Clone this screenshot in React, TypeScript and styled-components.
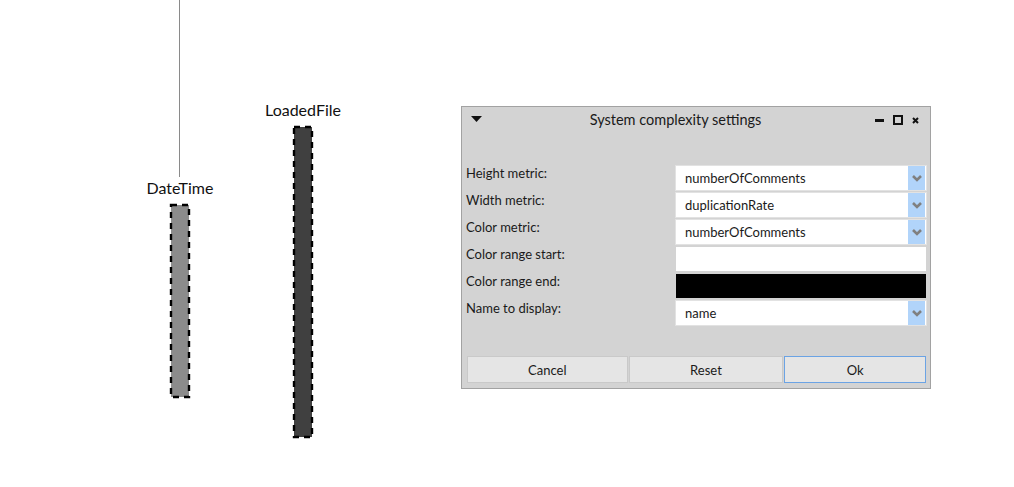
import React from "react";
import styled, { createGlobalStyle } from "styled-components";

const GlobalStyle = createGlobalStyle`
  *, *::before, *::after { box-sizing: border-box; }
  html, body { margin: 0; padding: 0; background: #ffffff; overflow: hidden; }
  body { font-family: Lato, "Liberation Sans", sans-serif; }
`;

const Stage = styled.div`
  position: relative;
  width: 1014px;
  height: 487px;
  background: #ffffff;
  overflow: hidden;
`;

const Canvas = styled.svg`
  position: absolute;
  left: 0;
  top: 0;
`;

const NodeLabel = styled.text`
  font-family: Lato, "Liberation Sans", sans-serif;
  font-size: 16px;
  fill: #111111;
`;

const Window = styled.div`
  position: absolute;
  left: 461px;
  top: 106px;
  width: 470px;
  height: 283px;
  border: 1px solid #a2a2a2;
  background: #d3d3d3;
  display: flex;
  flex-direction: column;
  padding: 0 4px 5px 4px;
`;

const TitleBar = styled.div`
  height: 27px;
  display: flex;
  align-items: center;
`;

const Title = styled.div`
  flex: 1;
  text-align: center;
  font-size: 14.5px;
  color: #1a1a1a;
  margin-top: -3px;
  margin-right: 6px;
`;

const TitleIcons = styled.div`
  display: flex;
  align-items: center;
  gap: 9px;
  padding-right: 7px;
  margin-top: -2px;
`;

const Form = styled.div`
  display: grid;
  grid-template-columns: 210px 250px;
  grid-auto-rows: 24px;
  row-gap: 3px;
  margin-top: 32px;
`;

const Label = styled.div`
  font-size: 13px;
  color: #1a1a1a;
  line-height: 16px;
  margin-top: -1px;
`;

const Dropdown = styled.div`
  display: flex;
  background: #ffffff;
  outline: 1px solid #e2e2e2;
`;

const DropText = styled.div`
  flex: 1;
  font-size: 13px;
  color: #1a1a1a;
  padding-left: 9px;
  display: flex;
  align-items: center;
`;

const DropArrow = styled.div`
  width: 17px;
  background: #b1d4fa;
  display: flex;
  align-items: center;
  justify-content: center;
  margin-right: 1px;
`;

const Swatch = styled.div<{ $color: string }>`
  background: ${(p) => p.$color};
`;

const Buttons = styled.div`
  margin-top: auto;
  display: flex;
  gap: 1px;
  padding-left: 1px;
`;

const Button = styled.div<{ $w: number; $primary?: boolean }>`
  width: ${(p) => p.$w}px;
  height: 27px;
  background: #e5e5e5;
  border: 1px solid ${(p) => (p.$primary ? "#6ba3e4" : "#c9c9c9")};
  display: flex;
  align-items: center;
  justify-content: center;
  font-size: 13px;
  color: #1a1a1a;
`;

const Chevron = () => (
  <svg width="10" height="7" viewBox="0 0 10 7">
    <polyline points="1,1 5,5 9,1" fill="none" stroke="#808080" strokeWidth="2.6" />
  </svg>
);

const rows: { label: string; kind: "drop" | "swatch"; value: string }[] = [
  { label: "Height metric:", kind: "drop", value: "numberOfComments" },
  { label: "Width metric:", kind: "drop", value: "duplicationRate" },
  { label: "Color metric:", kind: "drop", value: "numberOfComments" },
  { label: "Color range start:", kind: "swatch", value: "#ffffff" },
  { label: "Color range end:", kind: "swatch", value: "#000000" },
  { label: "Name to display:", kind: "drop", value: "name" },
];

export default function App() {
  return (
    <>
      <GlobalStyle />
      <Stage>
        <Canvas width="1014" height="487" viewBox="0 0 1014 487">
          <line x1="179.5" y1="0" x2="179.5" y2="177" stroke="#8a8a8a" strokeWidth="1" />
          <NodeLabel x="180" y="194" textAnchor="middle">DateTime</NodeLabel>
          <rect x="171" y="205" width="18" height="192" fill="#8c8c8c" stroke="#000" strokeWidth="2.4" strokeDasharray="6 5" />
          <NodeLabel x="303" y="116" textAnchor="middle">LoadedFile</NodeLabel>
          <rect x="294" y="127" width="18" height="310" fill="#404040" stroke="#000" strokeWidth="2.4" strokeDasharray="6 5" />
        </Canvas>
        <Window>
          <TitleBar>
            <svg width="11" height="7" viewBox="0 0 11 7" style={{ marginLeft: 5, marginTop: -3 }}>
              <polygon points="0,0 11,0 5.5,6" fill="#111" />
            </svg>
            <Title>System complexity settings</Title>
            <TitleIcons>
              <svg width="9" height="10" viewBox="0 0 9 10">
                <rect x="0" y="4" width="9" height="3" fill="#111" />
              </svg>
              <svg width="10" height="10" viewBox="0 0 10 10">
                <rect x="1" y="1" width="8" height="8" fill="none" stroke="#111" strokeWidth="2" />
              </svg>
              <svg width="7" height="10" viewBox="0 0 7 10">
                <path d="M1 3 L6 8 M6 3 L1 8" stroke="#111" strokeWidth="2" />
              </svg>
            </TitleIcons>
          </TitleBar>
          <Form>
            {rows.map((r) => (
              <React.Fragment key={r.label}>
                <Label>{r.label}</Label>
                {r.kind === "drop" ? (
                  <Dropdown>
                    <DropText>{r.value}</DropText>
                    <DropArrow>
                      <Chevron />
                    </DropArrow>
                  </Dropdown>
                ) : (
                  <Swatch $color={r.value} />
                )}
              </React.Fragment>
            ))}
          </Form>
          <Buttons>
            <Button $w={161}>Cancel</Button>
            <Button $w={155}>Reset</Button>
            <Button $w={142} $primary>Ok</Button>
          </Buttons>
        </Window>
      </Stage>
    </>
  );
}
